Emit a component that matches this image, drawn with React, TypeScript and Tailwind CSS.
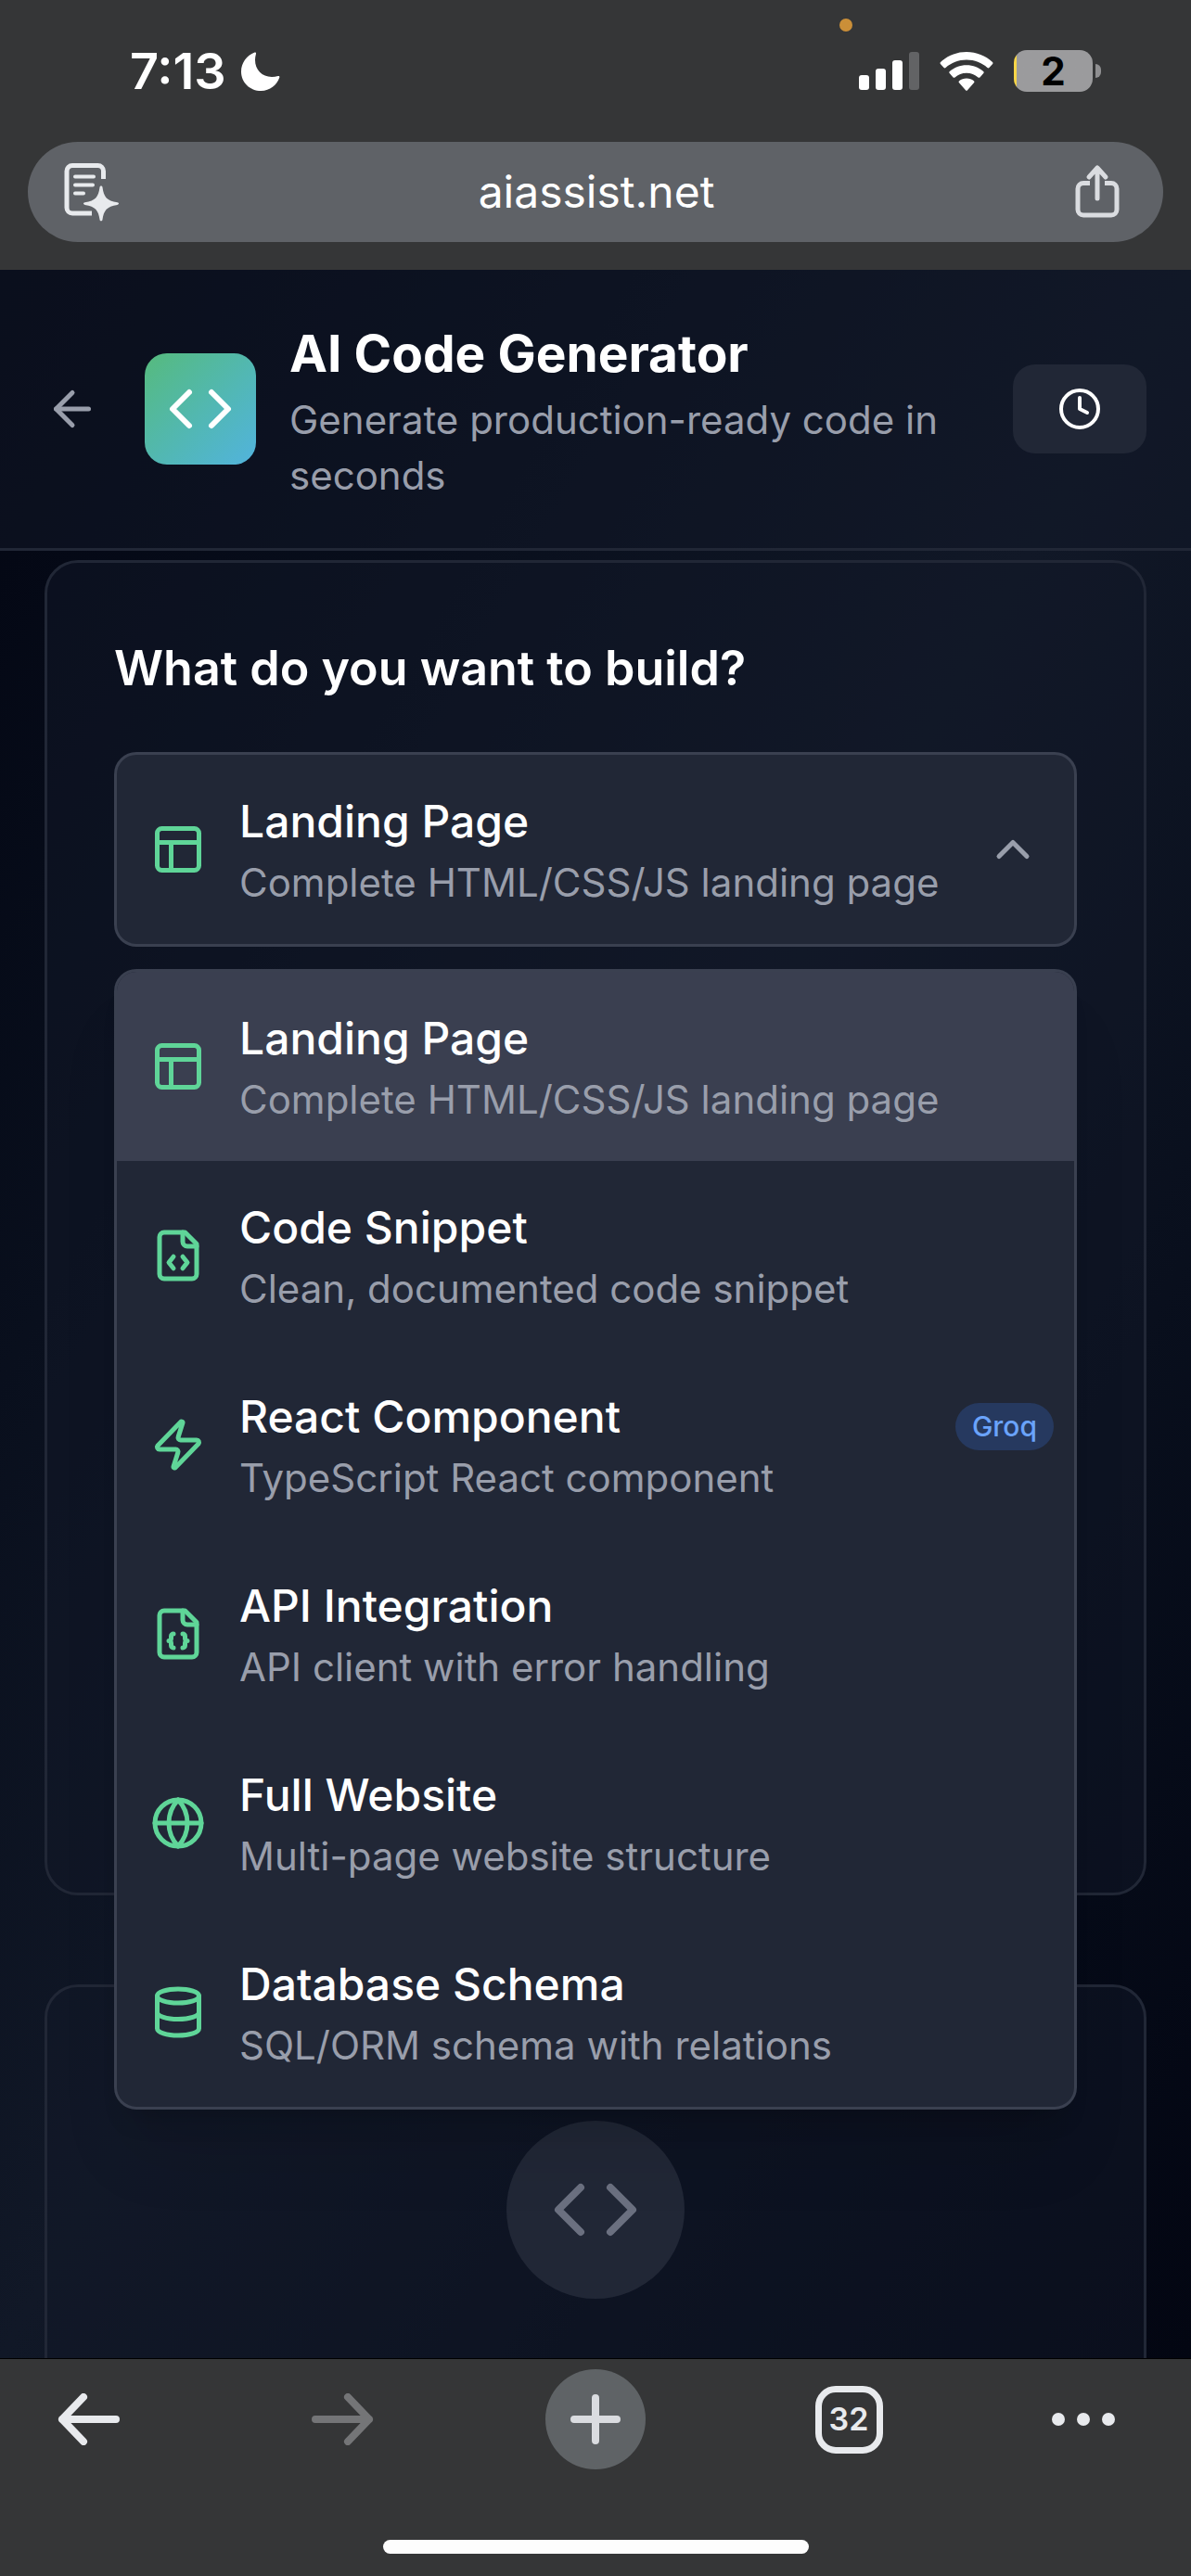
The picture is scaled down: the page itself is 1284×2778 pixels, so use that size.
import { useState } from "react";
import type { ComponentType, ReactNode } from "react";
import { ArrowLeft, ChevronDown, ChevronUp, Clock, Code, Database, Globe, PanelsTopLeft, Zap } from "lucide-react";

type IconProps = { className?: string };

type BuildType = {
  id: string;
  name: string;
  description: string;
  icon: ComponentType<IconProps>;
  badge?: string;
};

function FileIcon({ className, children }: { className?: string; children: ReactNode }) {
  return (
    <svg viewBox="0 0 24 24" fill="none" stroke="currentColor" strokeWidth="2" strokeLinecap="round" strokeLinejoin="round" className={className} aria-hidden="true">
      <path d="M15 2H6a2 2 0 0 0-2 2v16a2 2 0 0 0 2 2h12a2 2 0 0 0 2-2V7Z" />
      <path d="M14 2v4a2 2 0 0 0 2 2h4" />
      {children}
    </svg>
  );
}

function FileCodeIcon({ className }: IconProps) {
  return (
    <FileIcon className={className}>
      <path d="M10 12.5 8 15l2 2.5" />
      <path d="m14 12.5 2 2.5-2 2.5" />
    </FileIcon>
  );
}

function FileJsonIcon({ className }: IconProps) {
  return (
    <FileIcon className={className}>
      <path d="M10 12a1 1 0 0 0-1 1v1a1 1 0 0 1-1 1 1 1 0 0 1 1 1v1a1 1 0 0 0 1 1" />
      <path d="M14 18a1 1 0 0 0 1-1v-1a1 1 0 0 1 1-1 1 1 0 0 1-1-1v-1a1 1 0 0 0-1-1" />
    </FileIcon>
  );
}

const BUILD_TYPES: BuildType[] = [
  { id: "landing", name: "Landing Page", description: "Complete HTML/CSS/JS landing page", icon: PanelsTopLeft },
  { id: "snippet", name: "Code Snippet", description: "Clean, documented code snippet", icon: FileCodeIcon },
  { id: "react", name: "React Component", description: "TypeScript React component", icon: Zap, badge: "Groq" },
  { id: "api", name: "API Integration", description: "API client with error handling", icon: FileJsonIcon },
  { id: "website", name: "Full Website", description: "Multi-page website structure", icon: Globe },
  { id: "database", name: "Database Schema", description: "SQL/ORM schema with relations", icon: Database },
];

function StatusBar() {
  return (
    <div className="relative flex h-[153px] items-center justify-between pl-[140px] pr-[97px]">
      <span className="absolute left-[905px] top-5 h-[14px] w-[14px] rounded-full bg-[#cb8f38]" />

      <div className="flex items-center gap-4">
        <span className="text-[54px] font-semibold leading-[60px]">7:13</span>
        <svg viewBox="0 0 42 42" className="h-[42px] w-[42px]" fill="currentColor" aria-hidden="true">
          <path d="M14.5.6c1-.5 1.8.2 1.5 1.3-.7 2.4-1 4.500-1 6.700C15 19.500 22.500 27 33 27c2.300 0 4.500-.3 6.700-.9 1.200-.4 2 .4 1.600 1.500C38.500 36 31 42 21.500 42 9.500 42 0 33 0 21.200 0 12 6 3.800 14.500.6Z" />
        </svg>
      </div>

      <div className="flex items-center gap-[22px]">
        <svg viewBox="0 0 65 42" className="h-[42px] w-[65px]" fill="currentColor" aria-hidden="true">
          <rect x="0" y="25" width="11" height="16" rx="3" />
          <rect x="18" y="18" width="11" height="23" rx="3" />
          <rect x="36" y="9" width="11" height="32" rx="3" />
          <rect x="54" y="0" width="11" height="41" rx="3" fill="#626365" />
        </svg>
        <svg viewBox="0 0 58 42" className="h-[42px] w-[58px]" fill="currentColor" aria-hidden="true">
          <path d="M29 0c10.800 0 20.600 4.100 28 11 .6.600.6 1.400.1 2l-3.700 4c-.5.600-1.300.600-1.900 0C45.500 11.700 37.600 8.500 29 8.500S12.500 11.700 6.500 17c-.6.600-1.400.600-1.900 0L.9 13c-.5-.6-.5-1.400.1-2C8.400 4.100 18.200 0 29 0Z" />
          <path d="M29 14.200c7 0 13.300 2.600 18.200 6.900.6.600.7 1.400.1 2l-3.900 4.300c-.5.600-1.300.600-1.900.1A18.700 18.700 0 0 0 29 22.700c-4.800 0-9.200 1.800-12.500 4.800-.6.500-1.400.5-1.900-.1l-3.900-4.300c-.6-.6-.5-1.400.1-2 4.900-4.300 11.200-6.900 18.200-6.900Z" />
          <path d="M29 28.500c3 0 5.700 1 7.900 2.700.7.600.7 1.400.1 2l-7 8c-.6.700-1.400.700-2 0l-7-8c-.6-.6-.6-1.400.1-2 2.200-1.700 4.900-2.700 7.900-2.700Z" />
        </svg>
        <div className="flex items-center gap-[3px]">
          <div className="flex h-[45px] w-[85px] items-center justify-center rounded-[14px] bg-gradient-to-r from-[#f8d648] from-[3px] to-[#9b9b9d] to-[3px] text-[42px] font-bold leading-[45px] text-black">
            2
          </div>
          <span className="h-[15px] w-[6px] rounded-r-full bg-[#8f8f91]" />
        </div>
      </div>
    </div>
  );
}

function AddressBar() {
  return (
    <div className="mx-[30px] mb-[30px] flex h-[108px] items-center justify-between rounded-full bg-[#5f6267] pl-[38px] pr-11">
      <button type="button" aria-label="Reader mode" className="text-[#e8eaed]">
        <svg viewBox="0 0 62 64" className="h-[64px] w-[62px]" fill="none" aria-hidden="true">
          <g stroke="currentColor" strokeWidth="5">
            <path d="M43.500 18V9.500a6 6 0 0 0-6-6H10a6 6 0 0 0-6 6V49a6 6 0 0 0 6 6h21" />
            <path d="M13 15.500h20M13 24.500h19M13 33.500h9" strokeWidth="4" strokeLinecap="round" />
          </g>
          <path fill="currentColor" d="M41 25.500c.9 0 1.300.5 1.500 1.500 1.500 10.500 4.500 14.500 16 16.300 1 .2 1.500.6 1.500 1.300s-.5 1.100-1.500 1.300c-11.500 1.800-14.500 5.800-16 15.800-.2 1-.6 1.500-1.500 1.500s-1.300-.5-1.500-1.500c-1.500-10-4.500-14-16-15.800-1-.2-1.500-.6-1.500-1.300s.5-1.100 1.500-1.300C35 41.500 38 37.500 39.500 27c.2-1 .6-1.500 1.500-1.500Z" />
        </svg>
      </button>
      <input
        type="text"
        aria-label="Address"
        defaultValue="aiassist.net"
        className="min-w-0 flex-1 bg-transparent text-center text-[48px] leading-[60px] text-white outline-none"
      />
      <button type="button" aria-label="Share" className="text-[#dadce0]">
        <svg viewBox="0 0 54 60" className="h-[60px] w-[54px]" fill="none" stroke="currentColor" strokeWidth="5" aria-hidden="true">
          <path d="M19 20.500h-7a6 6 0 0 0-6 6V49a6 6 0 0 0 6 6h30a6 6 0 0 0 6-6V26.500a6 6 0 0 0-6-6h-7" />
          <path d="M27 37V5M18 14l9-10 9 10" strokeLinecap="round" strokeLinejoin="round" />
        </svg>
      </button>
    </div>
  );
}

function OptionText({ name, description, badge }: { name: string; description: string; badge?: string }) {
  return (
    <span className="flex min-w-0 flex-1 flex-col">
      <span className="flex items-end justify-between">
        <span className="text-[48px] font-medium leading-[72px] text-white">{name}</span>
        {badge && (
          <span className="-mr-3.5 rounded-full bg-[#26395f] px-[18px] py-[3px] text-[30px] font-medium leading-[45px] text-[#6aa3fb]">
            {badge}
          </span>
        )}
      </span>
      <span className="text-[42px] leading-[60px] text-[#999eab]">{description}</span>
    </span>
  );
}

function TypeSelect() {
  const [open, setOpen] = useState(true);
  const [selectedId, setSelectedId] = useState("landing");
  const selected = BUILD_TYPES.find((type) => type.id === selectedId) ?? BUILD_TYPES[0];
  const SelectedIcon = selected.icon;
  const Chevron = open ? ChevronUp : ChevronDown;

  return (
    <div className="relative">
      <button
        type="button"
        aria-haspopup="listbox"
        aria-expanded={open}
        onClick={() => setOpen(!open)}
        className="flex w-full items-center gap-9 rounded-3xl border-[3px] border-[#3a4050] bg-[#212736] p-9 text-left"
      >
        <SelectedIcon className="h-[60px] w-[60px] shrink-0 text-[#5fd598]" />
        <OptionText name={selected.name} description={selected.description} />
        <Chevron className="h-[60px] w-[60px] shrink-0 text-[#999eab]" />
      </button>

      {open && (
        <ul
          role="listbox"
          aria-label="Build type"
          className="absolute inset-x-0 top-full z-10 mt-6 overflow-hidden rounded-3xl border-[3px] border-[#3a4050] bg-[#212736] shadow-[0_60px_75px_-15px_rgba(0,0,0,0.1),0_24px_30px_-18px_rgba(0,0,0,0.2)]"
        >
          {BUILD_TYPES.map((type) => (
            <li key={type.id} role="option" aria-selected={type.id === selectedId}>
              <button
                type="button"
                onClick={() => {
                  setSelectedId(type.id);
                  setOpen(false);
                }}
                className={`flex w-full items-center gap-9 p-9 text-left ${type.id === selectedId ? "bg-[#3a3f50]" : "hover:bg-[#3a3f50]"}`}
              >
                <type.icon className="h-[60px] w-[60px] shrink-0 text-[#5fd598]" />
                <OptionText name={type.name} description={type.description} badge={type.badge} />
              </button>
            </li>
          ))}
        </ul>
      )}
    </div>
  );
}

function PageHeader() {
  return (
    <header className="flex items-center gap-12 border-b-[3px] border-[#212736] bg-[#111827]/50 p-12">
      <a href="#back" aria-label="Back" className="text-[#999eab]">
        <ArrowLeft className="h-[60px] w-[60px]" />
      </a>
      <div className="flex min-w-0 flex-1 items-center gap-9">
        <div className="flex h-[120px] w-[120px] shrink-0 items-center justify-center rounded-3xl bg-gradient-to-br from-[#56ba7c] to-[#52b3dd]">
          <Code className="h-[72px] w-[72px]" />
        </div>
        <div>
          <h1 className="text-[55px] font-bold leading-[84px]">AI Code Generator</h1>
          <p className="text-[42px] leading-[60px] text-[#999eab]">Generate production-ready code in seconds</p>
        </div>
      </div>
      <button type="button" aria-label="History" className="flex h-24 w-36 shrink-0 items-center justify-center rounded-3xl bg-[#212736]">
        <Clock className="h-12 w-12" />
      </button>
    </header>
  );
}

function BrowserToolbar() {
  return (
    <footer className="flex h-[235px] shrink-0 flex-col border-t border-black bg-[#353637] text-[#e8eaed]">
      <nav aria-label="Browser" className="mt-[11px] flex justify-between px-[42px]">
        <button type="button" aria-label="Back" className="flex h-[108px] w-[108px] items-center justify-center">
          <svg viewBox="0 0 68 56" className="h-14 w-[68px]" fill="none" stroke="currentColor" strokeWidth="8" strokeLinecap="round" strokeLinejoin="round" aria-hidden="true">
            <path d="M63 28H5M28 4 5 28l23 24" />
          </svg>
        </button>
        <button type="button" aria-label="Forward" disabled className="flex h-[108px] w-[108px] items-center justify-center text-[#747577]">
          <svg viewBox="0 0 68 56" className="h-14 w-[68px]" fill="none" stroke="currentColor" strokeWidth="8" strokeLinecap="round" strokeLinejoin="round" aria-hidden="true">
            <path d="M5 28h58M40 4l23 24-23 24" />
          </svg>
        </button>
        <button type="button" aria-label="New tab" className="flex h-[108px] w-[108px] items-center justify-center rounded-full bg-[#5f6366] text-[#dadce0]">
          <svg viewBox="0 0 56 56" className="h-14 w-14" fill="none" stroke="currentColor" strokeWidth="8" strokeLinecap="round" aria-hidden="true">
            <path d="M28 5v46M5 28h46" />
          </svg>
        </button>
        <button type="button" aria-label="Tabs" className="flex h-[108px] w-[108px] items-center justify-center">
          <span className="flex h-[73px] w-[73px] items-center justify-center rounded-[22px] border-[7px] border-[#e8eaed] text-[34px] font-semibold leading-none">
            32
          </span>
        </button>
        <button type="button" aria-label="More" className="flex h-[108px] w-[108px] items-center">
          <svg viewBox="0 0 68 14" className="h-[14px] w-[68px]" fill="currentColor" aria-hidden="true">
            <circle cx="7" cy="7" r="7" />
            <circle cx="34" cy="7" r="7" />
            <circle cx="61" cy="7" r="7" />
          </svg>
        </button>
      </nav>
      <div className="mx-auto mb-6 mt-auto h-[15px] w-[459px] rounded-full bg-[#fdfdfd]" />
    </footer>
  );
}

export default function App() {
  return (
    <div className="flex h-screen flex-col overflow-hidden bg-[#353637] font-['Inter',sans-serif] text-white">
      <div className="shrink-0">
        <StatusBar />
        <AddressBar />
      </div>

      <div className="flex min-h-0 flex-1 flex-col bg-gradient-to-br from-[#030612] via-[#111827] to-[#030612]">
        <PageHeader />

        <main className="flex min-h-0 flex-1 flex-col gap-24 overflow-hidden px-12 pt-[10px]">
          <section className="min-h-[1440px] shrink-0 rounded-[36px] border-[3px] border-[#212736] bg-[#111827]/50 p-[72px]">
            <h2 className="mb-12 text-[52px] font-semibold leading-[84px]">What do you want to build?</h2>
            <TypeSelect />
          </section>

          <section className="flex shrink-0 flex-col items-center rounded-[36px] border-[3px] border-[#212736] bg-[#111827]/50 py-36">
            <div className="flex h-48 w-48 items-center justify-center rounded-full bg-[#212736]">
              <Code className="h-24 w-24 text-[#6b7080]" />
            </div>
          </section>
        </main>
      </div>

      <BrowserToolbar />
    </div>
  );
}
